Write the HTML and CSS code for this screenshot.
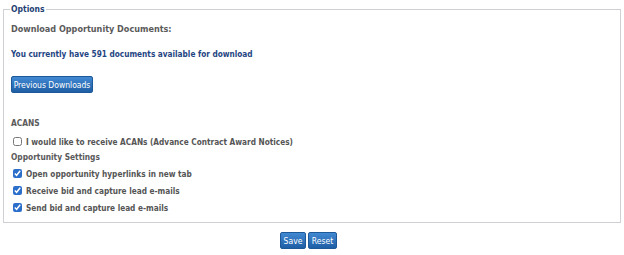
FILE: index.html
```html
<!DOCTYPE html>
<html lang="en">
<head>
    <meta charset="UTF-8">
    <title>Options</title>
    <link rel="stylesheet" href="styles.css">
</head>
<body>
    <form class="options-form">
        <fieldset class="options">
            <legend>Options</legend>
            <div class="download-title">Download Opportunity Documents:</div>
            <div class="doc-count">You currently have 591 documents available for download</div>
            <button type="button" class="btn btn-prev">Previous Downloads</button>

            <div class="section-title acans">ACANS</div>
            <label class="check first"><input type="checkbox"> I would like to receive ACANs (Advance Contract Award Notices)</label>

            <div class="section-title settings">Opportunity Settings</div>
            <label class="check"><input type="checkbox" checked> Open opportunity hyperlinks in new tab</label>
            <label class="check"><input type="checkbox" checked> Receive bid and capture lead e-mails</label>
            <label class="check"><input type="checkbox" checked> Send bid and capture lead e-mails</label>
        </fieldset>
        <div class="actions">
            <button type="submit" class="btn btn-save">Save</button>
            <button type="reset" class="btn btn-reset">Reset</button>
        </div>
    </form>
</body>
</html>
```
FILE: styles.css
```css
body {
    margin: 0;
    background: #fff;
    font-family: "DejaVu Sans Condensed", "DejaVu Sans", sans-serif;
    font-size: 9px;
    color: #555;
}
.options {
    margin: 4px 3px 0;
    padding: 6px 7px 6px;
    border: 1px solid #cfcfd6;
    min-width: 0;
}
.options legend {
    padding: 0 1px;
    margin-left: -1px;
    font-size: 8.5px;
    line-height: 11px;
    font-weight: bold;
    color: #1f3f73;
}
.download-title {
    font-weight: bold;
    color: #5a5a5a;
    line-height: 17px;
}
.doc-count {
    font-size: 8.2px;
    font-weight: bold;
    color: #1f4583;
    margin-top: 8px;
    line-height: 17px;
}
.btn {
    display: block;
    font-family: inherit;
    font-size: 8.5px;
    color: #fff;
    background: linear-gradient(#4189d2, #1f5ea5);
    border: 1px solid #1d5899;
    border-radius: 2px;
    padding: 0;
    height: 17px;
    text-align: center;
    cursor: pointer;
}
.btn-prev {
    width: 82px;
    margin-top: 13px;
}
.section-title {
    font-size: 8.3px;
    font-weight: bold;
    color: #5a5a5a;
}
.acans {
    margin-top: 22px;
    line-height: 17px;
}
.settings {
    line-height: 15px;
}
.check {
    display: flex;
    align-items: center;
    gap: 4px;
    height: 17px;
    font-size: 8.2px;
    font-weight: bold;
    color: #555;
    padding-left: 2px;
}
.check.first {
    margin-top: 1px;
}
.check input {
    margin: 0;
    width: 9px;
    height: 9px;
    accent-color: #2b6fcb;
}
.actions {
    display: flex;
    justify-content: center;
    gap: 2px;
    margin-top: 9px;
    padding-right: 7px;
}
.btn-save {
    width: 26px;
}
.btn-reset {
    width: 29px;
}
```
